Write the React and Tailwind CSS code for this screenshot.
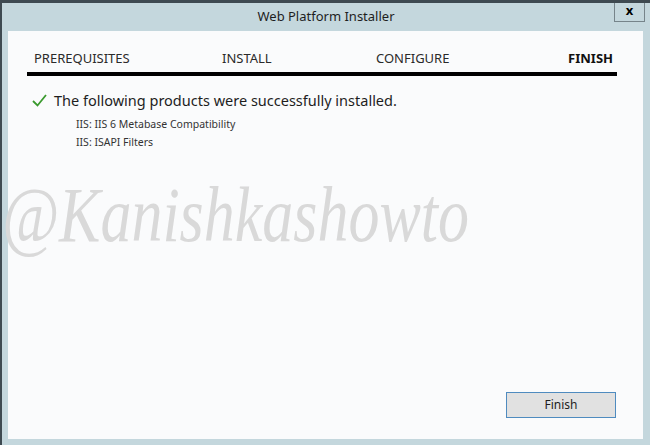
import React from 'react';

const steps = [
  { label: 'PREREQUISITES', width: 'w-[188px]' },
  { label: 'INSTALL', width: 'w-[154px]' },
  { label: 'CONFIGURE', width: 'flex-1' },
];

const installed = ['IIS: IIS 6 Metabase Compatibility', 'IIS: ISAPI Filters'];

const App = () => {
  return (
    <div className="w-[650px] h-[445px] flex flex-col bg-[#c4d7dd] border-t-[3px] border-l-2 border-[#3e4a51] font-['Noto_Sans',sans-serif] overflow-hidden">
      {/* title bar */}
      <div className="relative h-[28px] flex items-center justify-center text-[13px] text-[#1e1e1e]">
        <span className="-mt-[1px]">Web Platform Installer</span>
        <div className="absolute right-[5px] -top-[3px] w-[31px] h-[22px] border border-t-0 border-[#76848a] flex items-center justify-center text-[13px] font-bold text-black">
          x
        </div>
      </div>

      {/* content panel */}
      <div className="flex-1 ml-[6px] mr-[7px] mb-[6px] bg-[#fafbfc] flex flex-col">
        <div className="pt-[19px] pl-[19px] pr-[26px]">
          <div className="flex items-end pl-[7px] pr-[4px] text-[13px] text-[#2a2a2a] h-[18px]">
            {steps.map((s) => (
              <span key={s.label} className={s.width}>{s.label}</span>
            ))}
            <span className="font-bold text-[#111]">FINISH</span>
          </div>
          <div className="mt-[4px] h-[4px] bg-black" />
        </div>

        <div className="mt-[14px] pl-[24px] flex items-center gap-[7px]">
          <svg width="15" height="13" viewBox="0 0 15 13" className="shrink-0">
            <path d="M1 7 L5.5 11.5 L14 1" fill="none" stroke="#3a9a2e" strokeWidth="1.8" />
          </svg>
          <span className="text-[14.5px] text-[#1e1e1e]">The following products were successfully installed.</span>
        </div>
        <div className="pl-[68px] mt-[4px] flex flex-col gap-[1px] text-[10.5px] text-[#333]">
          {installed.map((item) => (
            <span key={item} className="leading-[17px]">{item}</span>
          ))}
        </div>

        <div className="mt-[40px] -ml-[6px] font-['Liberation_Serif',serif] italic text-[62px] leading-none text-[#d9d9d9] scale-y-125 origin-bottom select-none whitespace-nowrap">
          @Kanishkashowto
        </div>

        <div className="flex-1" />
        <div className="flex justify-end pr-[27px] pb-[21px]">
          <button className="w-[110px] h-[26px] bg-[#e1e1e1] border border-[#4f8bbf] text-[12px] text-[#1e1e1e]">
            Finish
          </button>
        </div>
      </div>
    </div>
  );
};

export default App;
